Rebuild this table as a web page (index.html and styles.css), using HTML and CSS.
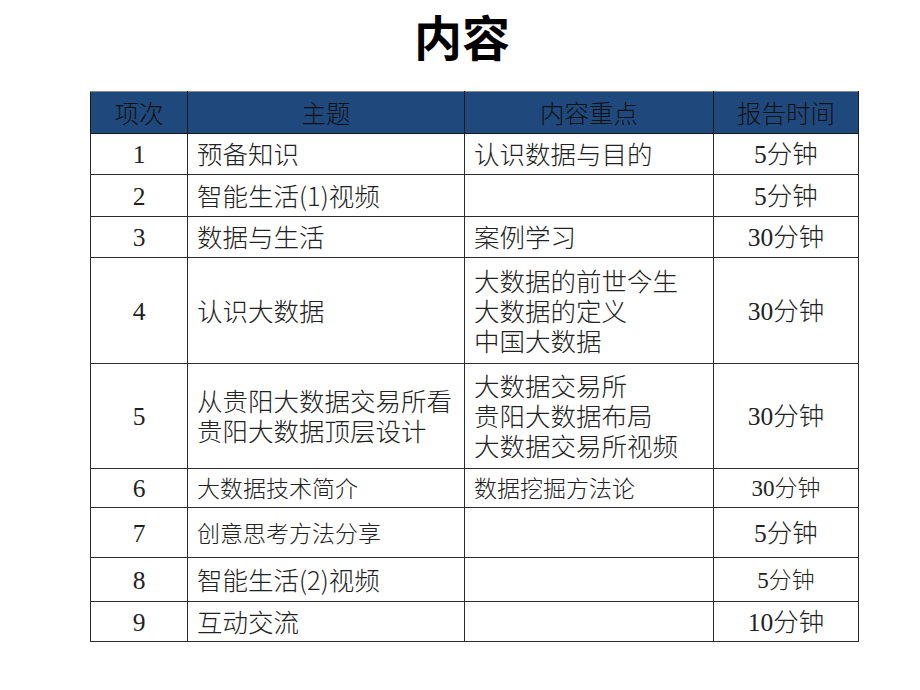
FILE: index.html
```html
<!DOCTYPE html>
<html lang="zh">
<head>
<meta charset="utf-8">
<link rel="stylesheet" href="styles.css">
</head>
<body>
<h1 class="title">内容</h1>
<table class="agenda">
  <colgroup>
    <col class="c1"><col class="c2"><col class="c3"><col class="c4">
  </colgroup>
  <thead>
    <tr class="head"><th>项次</th><th>主题</th><th>内容重点</th><th>报告时间</th></tr>
  </thead>
  <tbody>
    <tr class="r1"><td class="num">1</td><td class="txt">预备知识</td><td class="txt">认识数据与目的</td><td class="num">5分钟</td></tr>
    <tr class="r2"><td class="num">2</td><td class="txt">智能生活(1)视频</td><td class="txt"></td><td class="num">5分钟</td></tr>
    <tr class="r3"><td class="num">3</td><td class="txt">数据与生活</td><td class="txt">案例学习</td><td class="num">30分钟</td></tr>
    <tr class="r4"><td class="num">4</td><td class="txt">认识大数据</td><td class="txt">大数据的前世今生<br>大数据的定义<br>中国大数据</td><td class="num">30分钟</td></tr>
    <tr class="r5"><td class="num">5</td><td class="txt">从贵阳大数据交易所看<br>贵阳大数据顶层设计</td><td class="txt">大数据交易所<br>贵阳大数据布局<br>大数据交易所视频</td><td class="num">30分钟</td></tr>
    <tr class="r6"><td class="num">6</td><td class="txt small">大数据技术简介</td><td class="txt small">数据挖掘方法论</td><td class="num small">30分钟</td></tr>
    <tr class="r7"><td class="num">7</td><td class="txt small">创意思考方法分享</td><td class="txt"></td><td class="num">5分钟</td></tr>
    <tr class="r8"><td class="num">8</td><td class="txt">智能生活(2)视频</td><td class="txt"></td><td class="num small">5分钟</td></tr>
    <tr class="r9"><td class="num">9</td><td class="txt">互动交流</td><td class="txt"></td><td class="num">10分钟</td></tr>
  </tbody>
</table>
</body>
</html>
```

FILE: styles.css
```css
html, body {
  margin: 0;
  padding: 0;
  background: #ffffff;
}
body {
  width: 920px;
  height: 690px;
  font-family: "Liberation Serif", "Noto Sans CJK SC", serif;
  color: #1a1a1a;
}
.title {
  margin: 0;
  padding-top: 7px;
  height: 91px;
  box-sizing: border-box;
  text-align: center;
  font-family: "Noto Sans CJK SC", sans-serif;
  font-weight: 700;
  font-size: 48px;
  line-height: 56px;
  color: #000;
  padding-left: 4px;
}
.agenda {
  margin-left: 90px;
  width: 768px;
  border-collapse: collapse;
  table-layout: fixed;
  font-size: 25.5px;
}
.c1 { width: 97px; }
.c2 { width: 277px; }
.c3 { width: 249px; }
.c4 { width: 145px; }
.agenda th, .agenda td {
  border: 1.5px solid #2b2b2b;
  padding: 0;
  vertical-align: middle;
}
.head th {
  background: #1f497d;
  color: #111;
  font-weight: 300;
  height: 41px;
  font-family: "Noto Sans CJK SC", sans-serif;
  font-size: 24.5px;
  text-align: center;
  border-color: #1a1a1a;
  border-top-color: #888;
}
.num {
  text-align: center;
  font-weight: 300;
  color: #222;
  line-height: 30px;
  padding-top: 2px !important;
}
.txt {
  text-align: left;
  padding-left: 9px !important;
  padding-bottom: 2px !important;
  font-family: "Noto Sans CJK SC", sans-serif;
  font-weight: 300;
  line-height: 30px;
  color: #222;
  white-space: nowrap;
}
.small { font-size: 23px; }
.r1 td { height: 38px; }
.r2 td { height: 39px; }
.r3 td { height: 38px; }
.r4 td { height: 103px; }
.r5 td { height: 102px; }
.r6 td { height: 36px; }
.r7 td { height: 47px; }
.r8 td { height: 41px; }
.r9 td { height: 37px; }
```
